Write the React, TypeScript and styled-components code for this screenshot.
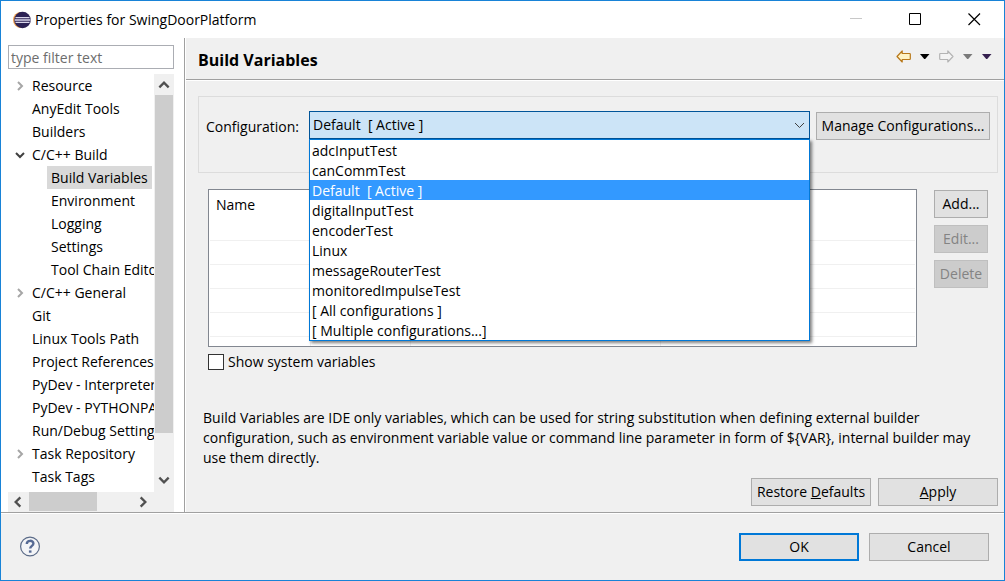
import React, { useState } from "react";
import styled, { createGlobalStyle, css } from "styled-components";

const GlobalStyle = createGlobalStyle`
  *, *::before, *::after { box-sizing: border-box; }
  body { margin: 0; }
  body, button, input, select {
    font-family: "Open Sans", "Noto Sans", sans-serif;
    font-size: 14px;
    line-height: 20px;
    color: #000;
  }
  h1, h2, p, ul { margin: 0; padding: 0; }
  ul { list-style: none; }
`;

const Window = styled.div`
  display: flex;
  flex-direction: column;
  min-height: 100vh;
  border: 1px solid #1883d7;
  background: #f0f0f0;
`;

const TitleBar = styled.header`
  display: flex;
  align-items: center;
  height: 37px;
  padding-left: 12px;
  background: #fff;
`;

const WindowTitle = styled.h1`
  flex: 1;
  margin-left: 4px;
  font-size: 14px;
  font-weight: 400;
`;

const CaptionButton = styled.button`
  display: grid;
  place-items: center;
  width: 59px;
  height: 37px;
  padding: 0;
  border: 0;
  background: none;
`;

const Body = styled.div`
  display: flex;
  flex: 1;
  border-bottom: 1px solid #a0a0a0;
`;

const Sidebar = styled.aside`
  display: flex;
  flex-direction: column;
  flex: none;
  width: 184px;
  gap: 5px;
  padding: 7px 10px 0 7px;
  border-right: 1px solid #a0a0a0;
  background: #fff;
`;

const FilterInput = styled.input`
  width: 100%;
  height: 24px;
  padding: 0 2px;
  border: 1px solid #abadb3;
  background: #fff;
  &::placeholder { color: #6d6d6d; opacity: 1; }
`;

const TreePane = styled.div`
  display: grid;
  flex: 1;
  grid-template-columns: minmax(0, 1fr) 20px;
  grid-template-rows: 1fr 20px;
`;

const Tree = styled.ul`
  overflow: hidden;
`;

const TreeRow = styled.li<{ $level: number }>`
  display: flex;
  align-items: center;
  height: 23px;
  padding-left: ${(p) => (p.$level ? 39 : 4)}px;
`;

const Twisty = styled.span`
  display: grid;
  flex: none;
  place-items: center;
  width: 16px;
`;

const TreeLabel = styled.button<{ $selected?: boolean }>`
  height: 23px;
  padding: 0 4px;
  border: 0;
  background: ${(p) => (p.$selected ? "#d9d9d9" : "none")};
  text-align: left;
  white-space: nowrap;
`;

const ScrollBar = styled.div<{ $horizontal?: boolean }>`
  display: flex;
  flex-direction: ${(p) => (p.$horizontal ? "row" : "column")};
  padding: ${(p) => (p.$horizontal ? "0 2px 0 0" : "1px 0 3px")};
  background: #f0f0f0;
`;

const ScrollButton = styled.button`
  display: grid;
  flex: none;
  place-items: center;
  width: 19px;
  height: 19px;
  padding: 0;
  border: 0;
  background: none;
`;

const ScrollTrack = styled.div<{ $horizontal?: boolean }>`
  display: flex;
  flex: 1;
  flex-direction: ${(p) => (p.$horizontal ? "row" : "column")};
  padding: ${(p) => (p.$horizontal ? "0 0 1px 2px" : "1px 1px 0 1px")};
`;

const ScrollThumb = styled.div<{ $percent: number }>`
  flex: 0 0 ${(p) => p.$percent}%;
  background: #cdcdcd;
`;

const Page = styled.main`
  display: flex;
  flex: 1;
  flex-direction: column;
  min-width: 0;
  border-left: 1px solid #fff;
`;

const PageHeader = styled.div`
  display: flex;
  align-items: center;
  justify-content: space-between;
  height: 42px;
  padding: 0 12px;
  border-bottom: 1px solid #a0a0a0;
`;

const PageTitle = styled.h2`
  padding-top: 2px;
  font-size: 16px;
  font-weight: 700;
  line-height: 24px;
`;

const NavTools = styled.div`
  display: flex;
  align-items: center;
  gap: 9px;
  padding-bottom: 4px;
`;

const ToolButton = styled.button`
  display: flex;
  padding: 0;
  border: 0;
  background: none;
`;

const PageContent = styled.div`
  display: flex;
  flex: 1;
  flex-direction: column;
  padding: 15px 6px 6px 12px;
  border-top: 1px solid #fff;
`;

const ConfigGroup = styled.section`
  display: flex;
  align-items: flex-start;
  height: 77px;
  padding: 14px 7px;
  border: 1px solid #dcdcdc;
`;

const ConfigLabel = styled.label`
  flex: none;
  width: 103px;
  padding-top: 6px;
`;

const Combo = styled.div`
  position: relative;
  flex: 1;
  margin-right: 6px;
`;

const ComboSelect = styled.select`
  display: block;
  width: 100%;
  height: 28px;
  padding: 0 24px 0 3px;
  border: 1px solid #005499;
  border-radius: 0;
  background: #cce4f7;
  appearance: none;
  outline: 0;
`;

const ComboArrow = styled.svg`
  position: absolute;
  top: 11px;
  right: 5px;
  pointer-events: none;
`;

const ComboList = styled.ul`
  position: absolute;
  z-index: 2;
  top: 100%;
  right: 0;
  left: 0;
  border: 1px solid #0078d7;
  background: #fff;
  box-shadow: 2px 2px 3px rgba(0, 0, 0, 0.5);
`;

const ComboOption = styled.li<{ $selected: boolean }>`
  height: 20px;
  padding: 0 2px;
  line-height: 22px;
  white-space: pre;
  ${(p) =>
    p.$selected &&
    css`
      background: #3399ff;
      color: #fff;
    `}
`;

const PushButton = styled.button<{ $width?: number; $primary?: boolean }>`
  flex: none;
  width: ${(p) => (p.$width ? `${p.$width}px` : "auto")};
  height: 28px;
  padding: 0;
  border: ${(p) => (p.$primary ? "2px solid #0078d7" : "1px solid #adadad")};
  background: #e1e1e1;
  white-space: nowrap;
  &:disabled {
    border-color: #bfbfbf;
    background: #cccccc;
    color: #838383;
  }
`;

const ManageButton = styled(PushButton)`
  margin-top: 1px;
`;

const VariablesArea = styled.section`
  display: flex;
  gap: 17px;
  margin: 16px 10px 0 10px;
`;

const TableFrame = styled.div`
  flex: 1;
  height: 158px;
  padding: 0 1px;
  border: 1px solid #828790;
  background: #fff;
`;

const VariablesTable = styled.table`
  width: 100%;
  height: 100%;
  border-collapse: separate;
  border-spacing: 0;
  table-layout: fixed;
  th {
    height: 27px;
    padding: 2px 6px 0;
    font-weight: 400;
    text-align: left;
  }
  td {
    height: 24px;
    padding: 0;
    border-right: 1px solid #f0f0f0;
    border-bottom: 1px solid #f0f0f0;
  }
  td:last-child { border-right: 0; }
  tr:last-child td { height: 9px; border-bottom: 0; }
`;

const ButtonColumn = styled.div`
  display: flex;
  flex-direction: column;
  gap: 7px;
  padding-top: 1px;
`;

const CheckLabel = styled.label`
  display: flex;
  align-items: center;
  align-self: flex-start;
  gap: 4px;
  margin: 5px 10px 36px;
`;

const CheckBox = styled.input`
  width: 16px;
  height: 16px;
  margin: 0;
  border: 1px solid #333;
  background: #fff;
  appearance: none;
  &:checked { box-shadow: inset 0 0 0 3px #fff; background: #333; }
`;

const Note = styled.p`
  margin: 0 10px 10px 5px;
`;

const ButtonRow = styled.div`
  display: flex;
  justify-content: flex-end;
  gap: 7px;
  margin-top: auto;
`;

const Footer = styled.footer`
  display: flex;
  align-items: center;
  gap: 10px;
  height: 67px;
  padding: 0 15px 0 18px;
  border-top: 1px solid #fff;
`;

const HelpButton = styled.button`
  display: flex;
  margin-right: auto;
  padding: 0;
  border: 0;
  background: none;
`;

const EclipseLogo = () => (
  <svg width="18" height="18" viewBox="0 0 18 18" aria-hidden="true">
    <circle cx="8" cy="9" r="8" fill="#f0a04b" />
    <circle cx="9.5" cy="9" r="8.3" fill="#2c2255" />
    <path d="M2.5 6.6h14M1.7 9h15.8M2.5 11.4h14" stroke="#d9d6ea" strokeWidth="1.3" />
  </svg>
);

const arrows = {
  up: "M2 8l4-4 4 4",
  down: "M2 4l4 4 4-4",
  left: "M8 2L4 6l4 4",
  right: "M4 2l4 4-4 4",
};

const Chevron = ({ dir, color = "#505050", size = 14 }: { dir: keyof typeof arrows; color?: string; size?: number }) => (
  <svg width={size} height={size} viewBox="0 0 12 12" fill="none" stroke={color} strokeWidth="2" aria-hidden="true">
    <path d={arrows[dir]} />
  </svg>
);

const Caret = ({ color }: { color: string }) => (
  <svg width="10" height="5" viewBox="0 0 10 5" aria-hidden="true">
    <path d="M0 0h9.5L5.2 5h-1z" fill={color} />
  </svg>
);

const BlockArrow = ({ flip, stroke, fill }: { flip?: boolean; stroke: string; fill: string }) => (
  <svg width="15" height="13" viewBox="0 0 15 13" aria-hidden="true">
    <path
      d={flip ? "M14 6.5L8.8 1v2.5H1.4q-.7 0-.7.7v4.6q0 .7.7.7h7.4V12z" : "M1 6.5L6.2 1v2.5h7.4q.7 0 .7.7v4.6q0 .7-.7.7H6.2V12z"}
      fill={fill}
      stroke={stroke}
      strokeWidth="1.2"
      strokeLinejoin="round"
    />
  </svg>
);

const HelpIcon = () => (
  <svg width="22" height="22" viewBox="0 0 22 22" fill="none" aria-hidden="true">
    <circle cx="11" cy="10.5" r="9.4" fill="#f4f5f7" stroke="#5b6b88" strokeWidth="1.2" />
    <path d="M7.8 8c0-4.3 6.6-4 6.6-.5 0 2.4-3.2 2.3-3.2 5.1" stroke="#566a94" strokeWidth="2.4" />
    <path d="M9.9 14.4h2.6v2.3H9.9z" fill="#566a94" />
  </svg>
);

type Node = { label: string; level?: number; state?: "open" | "closed" };

const nodes: Node[] = [
  { label: "Resource", state: "closed" },
  { label: "AnyEdit Tools" },
  { label: "Builders" },
  { label: "C/C++ Build", state: "open" },
  { label: "Build Variables", level: 1 },
  { label: "Environment", level: 1 },
  { label: "Logging", level: 1 },
  { label: "Settings", level: 1 },
  { label: "Tool Chain Editor", level: 1 },
  { label: "C/C++ General", state: "closed" },
  { label: "Git" },
  { label: "Linux Tools Path" },
  { label: "Project References" },
  { label: "PyDev - Interpreter" },
  { label: "PyDev - PYTHONPATH" },
  { label: "Run/Debug Settings" },
  { label: "Task Repository", state: "closed" },
  { label: "Task Tags" },
];

const configurations = [
  "adcInputTest",
  "canCommTest",
  "Default\u00a0 [ Active ]",
  "digitalInputTest",
  "encoderTest",
  "Linux",
  "messageRouterTest",
  "monitoredImpulseTest",
  "[ All configurations ]",
  "[ Multiple configurations...]",
];

const note =
  "Build Variables are IDE only variables, which can be used for string substitution when defining external " +
  "builder configuration, such as environment variable value or command line parameter in form of ${VAR}, " +
  "internal builder may use them directly.";

export default function App() {
  const [page, setPage] = useState("Build Variables");
  const [config, setConfig] = useState(configurations[2]);

  return (
    <Window>
      <GlobalStyle />
      <TitleBar>
        <EclipseLogo />
        <WindowTitle>Properties for SwingDoorPlatform</WindowTitle>
        <CaptionButton aria-label="Minimize" disabled>
          <svg width="13" height="13"><path d="M0 5.5h12" stroke="#c8c8c8" /></svg>
        </CaptionButton>
        <CaptionButton aria-label="Maximize">
          <svg width="13" height="13"><path d="M.5.5h11v11H.5z" fill="none" stroke="#000" /></svg>
        </CaptionButton>
        <CaptionButton aria-label="Close">
          <svg width="13" height="13"><path d="M.5.5l11.5 11.5M12 .5L.5 12" stroke="#000" strokeWidth="1.2" /></svg>
        </CaptionButton>
      </TitleBar>

      <Body>
        <Sidebar>
          <FilterInput type="text" placeholder="type filter text" aria-label="Filter" />
          <TreePane>
            <Tree>
              {nodes.map((n) => (
                <TreeRow key={n.label} $level={n.level ?? 0}>
                  {!n.level && (
                    <Twisty>
                      {n.state === "closed" && <Chevron dir="right" color="#a6a6a6" size={12} />}
                      {n.state === "open" && <Chevron dir="down" color="#404040" size={12} />}
                    </Twisty>
                  )}
                  <TreeLabel $selected={n.label === page} onClick={() => setPage(n.label)}>
                    {n.label}
                  </TreeLabel>
                </TreeRow>
              ))}
            </Tree>
            <ScrollBar>
              <ScrollButton aria-label="Scroll up"><Chevron dir="up" /></ScrollButton>
              <ScrollTrack><ScrollThumb $percent={90} /></ScrollTrack>
              <ScrollButton aria-label="Scroll down"><Chevron dir="down" /></ScrollButton>
            </ScrollBar>
            <ScrollBar $horizontal>
              <ScrollButton aria-label="Scroll left"><Chevron dir="left" /></ScrollButton>
              <ScrollTrack $horizontal><ScrollThumb $percent={65} /></ScrollTrack>
              <ScrollButton aria-label="Scroll right"><Chevron dir="right" /></ScrollButton>
            </ScrollBar>
            <ScrollBar />
          </TreePane>
        </Sidebar>

        <Page>
          <PageHeader>
            <PageTitle>Build Variables</PageTitle>
            <NavTools>
              <ToolButton aria-label="Back"><BlockArrow stroke="#b8781a" fill="#fff3c4" /></ToolButton>
              <ToolButton aria-label="Back history"><Caret color="#000" /></ToolButton>
              <ToolButton aria-label="Forward" disabled><BlockArrow flip stroke="#b4b4b4" fill="#f4f4f4" /></ToolButton>
              <ToolButton aria-label="Forward history" disabled><Caret color="#7a7a7a" /></ToolButton>
              <ToolButton aria-label="View menu"><Caret color="#35204f" /></ToolButton>
            </NavTools>
          </PageHeader>

          <PageContent>
            <ConfigGroup>
              <ConfigLabel htmlFor="configuration">Configuration:</ConfigLabel>
              <Combo>
                <ComboSelect id="configuration" value={config} onChange={(e) => setConfig(e.target.value)}>
                  {configurations.map((c) => (
                    <option key={c} value={c}>{c}</option>
                  ))}
                </ComboSelect>
                <ComboArrow width="11" height="7" viewBox="0 0 11 7" fill="none" stroke="#404040" aria-hidden="true">
                  <path d="M1 1l4.5 4.5L10 1" />
                </ComboArrow>
                <ComboList role="listbox" aria-label="Configurations">
                  {configurations.map((c) => (
                    <ComboOption
                      key={c}
                      role="option"
                      aria-selected={c === config}
                      $selected={c === config}
                      onClick={() => setConfig(c)}
                    >
                      {c}
                    </ComboOption>
                  ))}
                </ComboList>
              </Combo>
              <ManageButton $width={174}>Manage Configurations...</ManageButton>
            </ConfigGroup>

            <VariablesArea>
              <TableFrame>
                <VariablesTable>
                  <colgroup>
                    <col width="101" />
                    <col width="100" />
                    <col width="250" />
                    <col />
                  </colgroup>
                  <thead>
                    <tr>
                      <th scope="col">Name</th>
                      <th colSpan={3} />
                    </tr>
                  </thead>
                  <tbody>
                    {[0, 1, 2, 3, 4, 5].map((r) => (
                      <tr key={r}>
                        <td /><td /><td /><td />
                      </tr>
                    ))}
                  </tbody>
                </VariablesTable>
              </TableFrame>
              <ButtonColumn>
                <PushButton $width={54}>Add...</PushButton>
                <PushButton $width={54} disabled>Edit...</PushButton>
                <PushButton $width={54} disabled>Delete</PushButton>
              </ButtonColumn>
            </VariablesArea>

            <CheckLabel>
              <CheckBox type="checkbox" />
              Show system variables
            </CheckLabel>

            <Note>{note}</Note>

            <ButtonRow>
              <PushButton $width={120}>Restore <u>D</u>efaults</PushButton>
              <PushButton $width={120}><u>A</u>pply</PushButton>
            </ButtonRow>
          </PageContent>
        </Page>
      </Body>

      <Footer>
        <HelpButton aria-label="Help"><HelpIcon /></HelpButton>
        <PushButton $width={120} $primary>OK</PushButton>
        <PushButton $width={120}>Cancel</PushButton>
      </Footer>
    </Window>
  );
}
